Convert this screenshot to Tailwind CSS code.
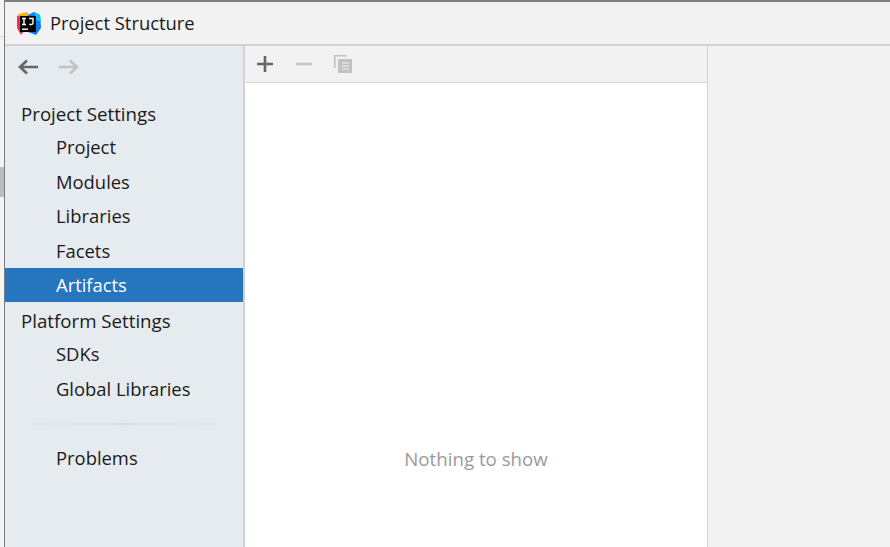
<!DOCTYPE html>
<html lang="en">
<head>
<meta charset="UTF-8" />
<title>Project Structure</title>
<script src="https://cdn.jsdelivr.net/npm/@tailwindcss/browser@4"></script>
</head>
<body class="bg-white overflow-hidden">
<div class="flex w-[890px] h-[547px] font-['Open_Sans','Noto_Sans',sans-serif] text-[18.4px] text-[#1a1a1a]">

  <!-- strip of the window behind -->
  <div class="w-[4px] shrink-0 flex flex-col bg-[#f4f4f4]">
    <div class="h-[36px] shrink-0"></div>
    <div class="h-[1px] shrink-0 bg-[#d4d4d4]"></div>
    <div class="h-[130px] shrink-0"></div>
    <div class="h-[30px] shrink-0 bg-[#bdbdbd]"></div>
    <div class="flex-1"></div>
  </div>

  <div class="flex-1 flex flex-col border-l border-t-2 border-[#7d7d7d] bg-[#f2f2f2] min-w-0">
    <!-- title bar -->
    <div class="h-[42px] shrink-0 flex items-center border-b-2 border-[#d1d1d1] box-content">
      <svg class="ml-[11px] mt-[2px]" width="26" height="26" viewBox="0 0 26 26">
        <path d="M1 5 L8 2 L14 4 L12 14 L5 24 L1 17 Z" fill="#fe2857"/>
        <path d="M2 3 L11 1 L14 5 L4 7 Z" fill="#fcb50d"/>
        <path d="M12 4 L18 1 L24 4 L25 17 L20 24 L12 21 Z" fill="#087cfa"/>
        <path d="M18 1 L24 4 L25 11 L20 9 Z" fill="#07c3f2"/>
        <rect x="4" y="5" width="16" height="16" fill="#000"/>
        <rect x="6" y="17.5" width="6" height="1.4" fill="#fff"/>
        <path d="M6 7.5h4M8 7.5v6M6 13.5h4M13 7.5h4v4.6c0 .9-.7 1.4-1.5 1.4h-2.2" stroke="#fff" stroke-width="1.4" fill="none"/>
      </svg>
      <span class="ml-[8px] text-[18.4px]">Project Structure</span>
    </div>

    <div class="flex-1 flex min-h-0">
      <!-- sidebar -->
      <div class="w-[238px] shrink-0 bg-[#e6ebf0] border-r-2 border-[#d1d1d1] box-content">
        <div class="h-[42px] flex items-center pl-[13px] gap-[19px]">
          <svg width="21" height="16" viewBox="0 0 21 16" fill="none" stroke="#666" stroke-width="2.6">
            <path d="M20 8H2M9 1.5 2 8l7 6.5"/>
          </svg>
          <svg width="21" height="16" viewBox="0 0 21 16" fill="none" stroke="#c2c2c2" stroke-width="2.6">
            <path d="M1 8h18M12 1.5 19 8l-7 6.5"/>
          </svg>
        </div>
        <div class="h-[34px] mt-[8px] pt-[2px] flex items-center pl-[16px] text-[18.7px]">Project Settings</div>
        <div class="h-[34px] flex items-center pl-[51px]">Project</div>
        <div class="h-[35px] flex items-center pl-[51px]">Modules</div>
        <div class="h-[34px] flex items-center pl-[51px]">Libraries</div>
        <div class="h-[35px] flex items-center pl-[51px]">Facets</div>
        <div class="h-[34px] flex items-center pl-[51px] bg-[#2675bf] text-white">Artifacts</div>
        <div class="h-[37px] pt-[2px] flex items-center pl-[16px] text-[18.7px]">Platform Settings</div>
        <div class="h-[33px] pb-[4px] flex items-center pl-[51px]">SDKs</div>
        <div class="h-[35px] pb-[2px] flex items-center pl-[51px]">Global Libraries</div>
        <div class="h-[2px] mt-[16px] mx-[8px] bg-gradient-to-r from-[#e6ebf0] via-[#dcdee0] to-[#e6ebf0]"></div>
        <div class="h-[34px] mt-[16px] flex items-center pl-[51px]">Problems</div>
      </div>

      <!-- list panel -->
      <div class="w-[462px] shrink-0 flex flex-col border-r border-[#d1d1d1] box-content">
        <div class="h-[36px] shrink-0 flex items-center border-b border-[#d9d9d9] box-content pl-[12px] gap-[23px]">
          <svg width="16" height="16" viewBox="0 0 16 16" fill="none" stroke="#666" stroke-width="2.6"><path d="M0 8h16M8 0v16"/></svg>
          <svg width="16" height="16" viewBox="0 0 16 16" fill="none" stroke="#c8c8c8" stroke-width="2.6"><path d="M0 8h16"/></svg>
          <svg width="18" height="18" viewBox="0 0 18 18" class="ml-[-1px] mt-[-1px]">
            <path d="M0.8 13V0.8h12" fill="none" stroke="#c2c2c2" stroke-width="1.6"/>
            <rect x="4" y="4" width="14" height="14" fill="#c2c2c2"/>
            <path d="M8 8h7M8 11h7M8 14h7" stroke="#f2f2f2" stroke-width="1.2"/>
          </svg>
        </div>
        <div class="flex-1 bg-white flex justify-center pt-[363px] text-[#9a9a9a] text-[18.7px] leading-[26px]">Nothing to show</div>
      </div>

      <div class="flex-1"></div>
    </div>
  </div>
</div>
</body>
</html>
